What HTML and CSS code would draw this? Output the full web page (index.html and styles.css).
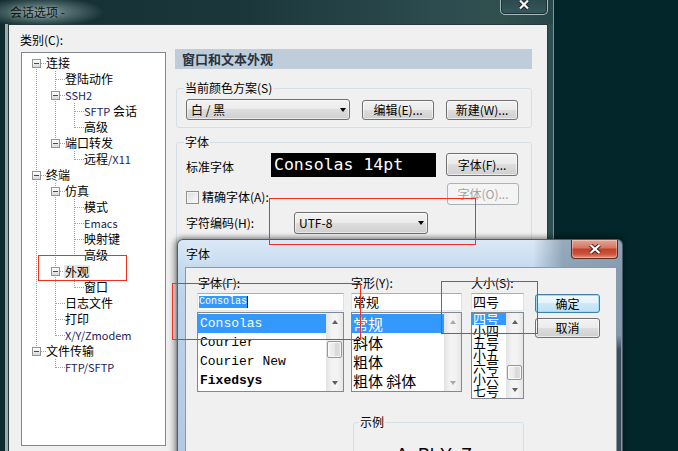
FILE: index.html
```html
<!DOCTYPE html>
<html lang="zh">
<head>
<meta charset="utf-8">
<title>会话选项</title>
<link rel="stylesheet" href="styles.css">
</head>
<body>
<div class="desk">
  <div class="win main">
    <div class="tbar">
      <span class="ttl">会话选项 -</span>
      <span class="xmain"><svg width="12" height="11" viewBox="0 0 12 11"><path d="M2 1.5 L10 9.5 M10 1.5 L2 9.5" stroke="#1b2526" stroke-width="4"/><path d="M2 1.5 L10 9.5 M10 1.5 L2 9.5" stroke="#f4f4f4" stroke-width="2.2"/></svg></span>
    </div>
    <div class="client">
      <div class="lcol">
        <div class="lbl">类别(C):</div>
        <div class="tree">
          <div class="r"><span class="c f"><span class="e"></span></span><span class="tx">连接</span></div>
          <div class="r"><span class="c p"></span><span class="c t"></span><span class="tx">登陆动作</span></div>
          <div class="r"><span class="c p"></span><span class="c t"><span class="e"></span></span><span class="tx en">SSH2</span></div>
          <div class="r"><span class="c p"></span><span class="c p"></span><span class="c t"></span><span class="tx"><span class="en">SFTP</span> 会话</span></div>
          <div class="r"><span class="c p"></span><span class="c p"></span><span class="c l"></span><span class="tx">高级</span></div>
          <div class="r"><span class="c p"></span><span class="c l"><span class="e"></span></span><span class="tx">端口转发</span></div>
          <div class="r"><span class="c p"></span><span class="c"></span><span class="c l"></span><span class="tx">远程<span class="en">/X11</span></span></div>
          <div class="r"><span class="c t"><span class="e"></span></span><span class="tx">终端</span></div>
          <div class="r"><span class="c p"></span><span class="c t"><span class="e"></span></span><span class="tx">仿真</span></div>
          <div class="r"><span class="c p"></span><span class="c p"></span><span class="c t"></span><span class="tx">模式</span></div>
          <div class="r"><span class="c p"></span><span class="c p"></span><span class="c t"></span><span class="tx en">Emacs</span></div>
          <div class="r"><span class="c p"></span><span class="c p"></span><span class="c t"></span><span class="tx">映射键</span></div>
          <div class="r"><span class="c p"></span><span class="c p"></span><span class="c l"></span><span class="tx">高级</span></div>
          <div class="r"><span class="c p"></span><span class="c t"><span class="e"></span></span><span class="tx sel">外观</span></div>
          <div class="r"><span class="c p"></span><span class="c p"></span><span class="c l"></span><span class="tx">窗口</span></div>
          <div class="r"><span class="c p"></span><span class="c t"></span><span class="tx">日志文件</span></div>
          <div class="r"><span class="c p"></span><span class="c t"></span><span class="tx">打印</span></div>
          <div class="r"><span class="c p"></span><span class="c l"></span><span class="tx en">X/Y/Zmodem</span></div>
          <div class="r"><span class="c l"><span class="e"></span></span><span class="tx">文件传输</span></div>
          <div class="r"><span class="c"></span><span class="c l"></span><span class="tx en">FTP/SFTP</span></div>
        </div>
      </div>
      <div class="rcol">
        <div class="hdr">窗口和文本外观</div>
        <div class="grp g1">
          <div class="gt">当前颜色方案(S)</div>
          <div class="row1">
            <div class="combo c1"><span>白 / 黑</span><span class="arr"></span></div>
            <div class="btn b72">编辑(E)...</div>
            <div class="btn b72">新建(W)...</div>
          </div>
        </div>
        <div class="grp g2">
          <div class="gt">字体</div>
          <div class="rowA">
            <div class="lab la">标准字体</div>
            <div class="fontbox">Consolas 14pt</div>
            <div class="btn b72 hA">字体(F)...</div>
          </div>
          <div class="rowB">
            <span class="chk"></span>
            <div class="lab lb">精确字体(A):</div>
            <div class="btn b72 hB dis">字体(O)...</div>
          </div>
          <div class="rowC">
            <div class="lab lc">字符编码(H):</div>
            <div class="combo c2"><span>UTF-8</span><span class="arr"></span></div>
          </div>
        </div>
      </div>
    </div>
  </div>

  <div class="win dlg">
    <div class="dtbar">
      <span class="dttl">字体</span>
      <span class="xdlg"><svg width="12" height="10" viewBox="0 0 12 10"><path d="M1.5 1 L10.5 9 M10.5 1 L1.5 9" stroke="#3a2320" stroke-width="4"/><path d="M1.5 1 L10.5 9 M10.5 1 L1.5 9" stroke="#fff" stroke-width="2.2"/></svg></span>
    </div>
    <div class="dclient">
      <div class="drow">
        <div class="col1">
          <div class="dl d1">字体(F):</div>
          <div class="inp"><span class="seltext">Consolas</span><span class="caret"></span></div>
          <div class="list">
            <div class="items mono">
              <div class="li sel">Consolas</div>
              <div class="li">Courier</div>
              <div class="li">Courier New</div>
              <div class="li bold">Fixedsys</div>
            </div>
            <div class="sb">
              <div class="sbb"><span class="au"></span></div>
              <div class="th th1"></div>
              <div class="sbfill"></div>
              <div class="sbb"><span class="ad"></span></div>
            </div>
          </div>
        </div>
        <div class="col2">
          <div class="dl">字形(Y):</div>
          <div class="inp cjk">常规</div>
          <div class="list">
            <div class="items big">
              <div class="li sel">常规</div>
              <div class="li">斜体</div>
              <div class="li">粗体</div>
              <div class="li">粗体 斜体</div>
            </div>
            <div class="sb off">
              <div class="sbb"><span class="au"></span></div>
              <div class="sbfill"></div>
              <div class="sbb"><span class="ad"></span></div>
            </div>
          </div>
        </div>
        <div class="col3">
          <div class="dl">大小(S):</div>
          <div class="inp cjk">四号</div>
          <div class="list list3">
            <div class="items small">
              <div class="li sel">四号</div>
              <div class="li">小四</div>
              <div class="li">五号</div>
              <div class="li">小五</div>
              <div class="li">六号</div>
              <div class="li">小六</div>
              <div class="li">七号</div>
            </div>
            <div class="sb">
              <div class="sbb"><span class="au"></span></div>
              <div class="th th3"></div>
              <div class="sbfill"></div>
              <div class="sbb"><span class="ad"></span></div>
            </div>
          </div>
        </div>
        <div class="col4">
          <div class="btn dbtn ok">确定</div>
          <div class="btn dbtn cancel">取消</div>
        </div>
      </div>
      <div class="sample">
        <div class="gt">示例</div>
        <div class="stext">AaBbYyZz</div>
      </div>
    </div>
  </div>

  <div class="mk mkA"></div>
  <div class="mk mkB"></div>
  <div class="mk mkC"></div>
  <div class="mk mkD"></div>
</div>
</body>
</html>
```

FILE: styles.css
```css
* { box-sizing: border-box; }
html, body { margin: 0; padding: 0; }
body {
  width: 678px; height: 451px; overflow: hidden;
  background: #02262a;
  font-family: "Noto Sans CJK SC", "Noto Sans", sans-serif;
  font-size: 12px; color: #000;
}
.desk { position: relative; width: 678px; height: 451px; overflow: hidden; background: #02262a; }

/* ---------- main window ---------- */
.main {
  position: absolute; left: 0; top: 0;
  width: 554px; height: 480px;
  background: linear-gradient(to right, #0f2b2e 0, #1a3639 40%, #264447 80%, #2f4f52 100%);
  border-right: 1px solid #7f9698;
}
.tbar {
  height: 24px; display: flex; align-items: flex-start;
  background:
    radial-gradient(ellipse 62px 15px at 42px 12px, rgba(150,175,175,.85), rgba(150,175,175,0) 100%),
    linear-gradient(to right, #142f33 0%, #1b373b 45%, #2c4b4f 78%, #30504f 90%, #294649 100%);
}
.ttl { margin: 5px 0 0 10px; line-height: 14px; color: #101414; text-shadow: 0 0 5px rgba(255,255,255,.35); white-space: nowrap; }
.xmain {
  margin: -6px 5px 0 auto; width: 48px; height: 21px;
  border: 1px solid #a9b8b9; border-top: none; border-radius: 0 0 5px 5px;
  background: linear-gradient(#28454a, #35575b);
  box-shadow: inset 0 0 0 1px #1c3033;
  display: flex; align-items: center; justify-content: center;
}
.client {
  margin-left: 8px; width: 540px; height: 460px;
  background: #f0f0f0;
  border: 1px solid #283a3c; border-bottom: none;
  box-shadow: -3px 0 0 #9eaaab;
  display: flex; align-items: flex-start;
}
.lcol { margin-left: 12px; padding-top: 8px; width: 145px; flex: none; }
.lbl { margin-left: -1px; height: 14px; line-height: 14px; }
.tree {
  margin-top: 5px; height: 394px;
  border: 1px solid #828790; background: #fff;
  padding: 2px 0 0 5px;
}
.r { display: flex; align-items: center; height: 16px; }
.c {
  flex: none; width: 19px; height: 16px; display: flex; align-items: flex-start;
  --v: repeating-linear-gradient(to bottom, #a0a0a0 0 1px, transparent 1px 2px);
  --h: repeating-linear-gradient(to right, #a0a0a0 0 1px, transparent 1px 2px);
  background-repeat: no-repeat;
}
.c.p { background-image: var(--v); background-position: 9px 0; background-size: 1px 16px; }
.c.t { background-image: var(--v), var(--h); background-position: 9px 0, 10px 8px; background-size: 1px 16px, 9px 1px; }
.c.l { background-image: var(--v), var(--h); background-position: 9px 0, 10px 8px; background-size: 1px 9px, 9px 1px; }
.c.f { background-image: var(--v), var(--h); background-position: 9px 8px, 10px 8px; background-size: 1px 8px, 9px 1px; }
.e {
  width: 9px; height: 9px; margin: 4px 0 0 5px;
  border: 1px solid #949494;
  background:
    linear-gradient(#2f4f82, #2f4f82) 1px 3px / 5px 1px no-repeat,
    linear-gradient(#ffffff, #d9d9d9);
}
.tx { line-height: 16px; white-space: nowrap; }
.en { font-size: 11px; color: #1e2258; }
.tx .en { font-size: 11px; }
.tx.sel { background: #e6e6e6; height: 13px; line-height: 13px; margin-left: -1px; padding: 0 1px; }

.rcol { margin-left: 9px; padding-top: 24px; width: 357px; flex: none; }
.hdr {
  height: 20px; line-height: 20px; padding-left: 7px;
  background: #bfcddb; color: #2a333e;
  font-weight: bold; font-size: 13px; white-space: nowrap;
}
.grp {
  margin-left: 1px; width: 356px;
  border: 1px solid #d5dfe5; border-radius: 3px;
}
.gt {
  margin-top: -8px; margin-left: -2px; width: fit-content;
  padding: 0 1px; height: 14px; line-height: 14px;
  background: #f0f0f0; white-space: nowrap;
}
.g1 { margin-top: 19px; padding: 0 12px 7px 9px; }
.row1 { display: flex; align-items: flex-end; margin-top: 4px; }
.combo {
  display: flex; align-items: center; padding-left: 4px;
  border: 1px solid #707070; border-radius: 3px;
  background: linear-gradient(#f2f2f2 0%, #ebebeb 49%, #dddddd 50%, #cfcfcf 100%);
  box-shadow: inset 0 0 0 1px rgba(255,255,255,.55);
  white-space: nowrap; line-height: 14px;
}
.c1 { width: 164px; height: 21px; }
.c2 { width: 134px; height: 22px; }
.arr {
  margin-left: auto; margin-right: 3px;
  width: 0; height: 0;
  border-left: 3.5px solid transparent; border-right: 3.5px solid transparent;
  border-top: 4px solid #000;
}
.btn {
  display: flex; align-items: center; justify-content: center;
  border: 1px solid #707070; border-radius: 3px;
  background: linear-gradient(#f2f2f2 0%, #ebebeb 49%, #dddddd 50%, #cfcfcf 100%);
  box-shadow: inset 0 0 0 1px rgba(255,255,255,.6);
  white-space: nowrap; line-height: 14px; color: #000;
}
.b72 { width: 72px; height: 20px; margin-left: 12px; flex: none; }
.btn.dis {
  border-color: #adb2b5; background: #f4f4f4; box-shadow: none; color: #a3a3a3;
}
.g2 { margin-top: 14px; padding: 0 12px 0 9px; height: 320px; }
.lab { line-height: 14px; white-space: nowrap; flex: none; }
.rowA { display: flex; align-items: flex-start; margin-top: 4px; }
.la { width: 85px; margin-top: 7px; }
.fontbox {
  width: 165px; height: 24px; flex: none;
  background: #000; color: #fff;
  font-family: "DejaVu Sans Mono", monospace; font-size: 16.5px; line-height: 24px;
  padding-left: 3px; white-space: pre; overflow: hidden;
}
.hA { height: 23px; margin-left: 10px; }
.rowB { display: flex; align-items: flex-start; margin-top: 6px; }
.chk {
  flex: none; width: 13px; height: 13px; margin-top: 8px;
  border: 1px solid #8e8f8f;
  background: linear-gradient(135deg, #dcdcdc, #fbfbfb);
  box-shadow: inset 0 0 0 1px #f4f4f4;
}
.lb { margin: 7px 0 0 3px; }
.hB { height: 22px; margin-left: auto; }
.rowC { display: flex; align-items: flex-start; margin-top: 7px; }
.lc { width: 108px; margin-top: 4px; }

/* ---------- font dialog ---------- */
.dlg {
  position: absolute; left: 177px; top: 239px;
  width: 446px; height: 240px;
  border: 1px solid #4e5d6b; border-bottom: none;
  border-radius: 6px 6px 0 0;
  background:
    linear-gradient(to bottom, rgba(0,0,0,0) 0 95px, rgba(40,50,58,.75) 110px, rgba(40,50,58,.75) 100%) right 1px top 0 / 4px 100% no-repeat,
    linear-gradient(to right, rgba(0,0,0,0) 0 355px, rgba(70,95,115,.45) 385px, rgba(70,95,115,.5) 100%),
    linear-gradient(to bottom, #dbe8f6 0, #c7dbef 27px, #bed3ea 60px, #b2c7de 100%);
  box-shadow: -3px 0 6px rgba(0,0,0,.35), 0 -2px 5px rgba(0,0,0,.25);
}
.dtbar { height: 27px; display: flex; align-items: flex-start; }
.dttl { margin: 7px 0 0 8px; line-height: 14px; white-space: nowrap; text-shadow: 0 0 6px rgba(255,255,255,.9); }
.xdlg {
  margin: 0 4px 0 auto; width: 47px; height: 19px;
  border: 1px solid #5b2a22; border-top: none; border-radius: 0 0 4px 4px;
  background: linear-gradient(#e6a597 0%, #d47863 42%, #c2412b 52%, #cd5039 78%, #e2947c 100%);
  box-shadow: inset 0 0 0 1px rgba(255,255,255,.3);
  display: flex; align-items: center; justify-content: center;
}
.dclient {
  margin-left: 7px; width: 432px; height: 220px;
  background: #f0f0f0;
  border: 1px solid #8799ab; border-bottom: none;
  padding: 8px 0 0 11px;
}
.drow { display: flex; align-items: flex-start; }
.col1 { width: 147px; flex: none; }
.col2 { width: 111px; margin-left: 7px; flex: none; }
.col3 { width: 53px; margin-left: 9px; flex: none; }
.col4 { width: 65px; margin-left: 11px; padding-top: 18px; flex: none; }
.dl { height: 14px; line-height: 14px; white-space: nowrap; }
.d1 { margin-left: 1px; }
.inp {
  margin-top: 3px; height: 18px;
  border: 1px solid #abadb3; border-color: #abadb3 #dbdfe6 #e3e9ef #e2e3ea;
  background: #fff; display: flex; align-items: flex-start;
  white-space: nowrap;
}
.inp.cjk { font-size: 13px; line-height: 16px; padding-left: 1px; }
.seltext {
  margin: 2px 0 0 1px; height: 12px; line-height: 12px;
  background: #3399ff; color: #fff;
  font-family: "Liberation Mono", monospace; font-size: 10px;
}
.caret { width: 1px; height: 12px; margin-top: 2px; background: #222; }
.list {
  margin-top: 1px; height: 80px;
  border: 1px solid #828790; background: #fff;
  display: flex;
}
.list3 { height: 87px; }
.items { flex: 1; overflow: hidden; }
.mono { font-family: "Liberation Mono", monospace; font-size: 13px; padding-top: 1px; }
.mono .li { height: 19px; line-height: 19px; padding-left: 2px; }
.bold { font-weight: bold; }
.big { font-size: 15px; padding-top: 1px; }
.big .li { height: 19px; line-height: 19px; padding-left: 1px; }
.small { font-size: 13px; }
.small .li { height: 12px; line-height: 12px; padding-left: 1px; overflow: visible; }
.li { white-space: nowrap; }
.li.sel { background: #3399ff; color: #fff; }
.sb {
  width: 17px; flex: none; display: flex; flex-direction: column;
  background: linear-gradient(to right, #e2e2e2, #f3f3f3 35%, #f3f3f3 65%, #e6e6e6);
}
.sbb { height: 17px; flex: none; display: flex; align-items: center; justify-content: center; }
.sbfill { flex: 1; }
.au, .ad { width: 0; height: 0; border-left: 3.5px solid transparent; border-right: 3.5px solid transparent; }
.au { border-bottom: 4px solid #5f5f5f; }
.ad { border-top: 4px solid #5f5f5f; }
.sb.off .au { border-bottom-color: #a9a9a9; }
.sb.off .ad { border-top-color: #a9a9a9; }
.th {
  flex: none; margin-left: 1px; width: 15px;
  border: 1px solid #979797; border-radius: 2px;
  background: linear-gradient(to right, #f4f4f4, #e8e8e8 50%, #d8d8d8 51%, #e0e0e0);
  box-shadow: inset 0 0 0 1px rgba(255,255,255,.7);
}
.th1 { margin-top: 11px; height: 17px; }
.th3 { margin-top: 35px; height: 15px; }
.dbtn { width: 65px; height: 19px; }
.ok {
  border-color: #3c7fb1;
  background: linear-gradient(#f2f9fd 0%, #e4f3fc 49%, #cfe9f8 50%, #bee0f5 100%);
  box-shadow: inset 0 0 0 1px #9fdcf8;
}
.cancel { margin-top: 5px; height: 20px; }
.sample {
  margin: 23px 0 0 156px; width: 171px; height: 70px;
  border: 1px solid #d5dfe5; border-radius: 3px;
}
.sample .gt { margin-left: 5px; }
.stext {
  margin-top: 15px; text-align: center;
  font-family: "Liberation Sans", sans-serif; font-size: 18px; line-height: 22px;
}

/* ---------- red annotation boxes ---------- */
.mk { position: absolute; border: 1px solid #f0321c; }
.mkA { left: 38px; top: 255px; width: 89px; height: 26px; }
.mkB { left: 269px; top: 198px; width: 207px; height: 47px; }
.mkC { left: 172px; top: 283px; width: 189px; height: 57px; }
.mkD { left: 441px; top: 281px; width: 97px; height: 53px; }
```
